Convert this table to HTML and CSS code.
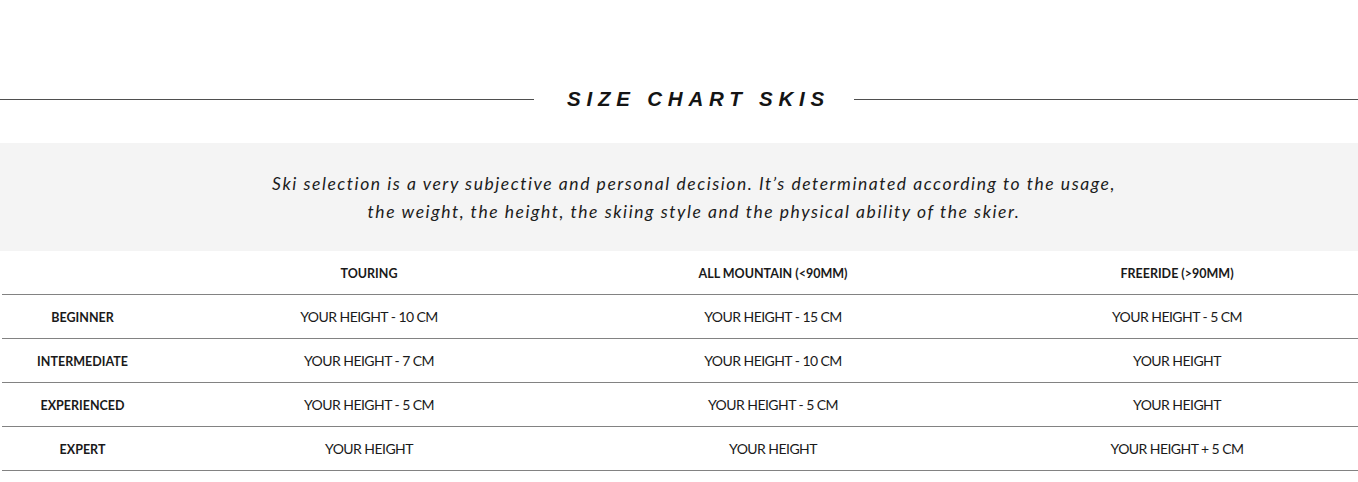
FILE: index.html
```html
<!DOCTYPE html>
<html>
<head>
<meta charset="utf-8">
<link rel="stylesheet" href="styles.css">
</head>
<body>
<section class="chart">
  <div class="title-row">
    <span class="rule"></span>
    <h2 class="title">SIZE CHART SKIS</h2>
    <span class="rule"></span>
  </div>
  <div class="intro">
    <p>Ski selection is a very subjective and personal decision. It’s determinated according to the usage,<br>the weight, the height, the skiing style and the physical ability of the skier.</p>
  </div>
  <div class="table">
    <div class="row head">
      <div class="cell label"></div>
      <div class="cell">TOURING</div>
      <div class="cell">ALL MOUNTAIN (&lt;90MM)</div>
      <div class="cell">FREERIDE (&gt;90MM)</div>
    </div>
    <div class="row">
      <div class="cell label">BEGINNER</div>
      <div class="cell">YOUR HEIGHT - 10 CM</div>
      <div class="cell">YOUR HEIGHT - 15 CM</div>
      <div class="cell">YOUR HEIGHT - 5 CM</div>
    </div>
    <div class="row">
      <div class="cell label">INTERMEDIATE</div>
      <div class="cell">YOUR HEIGHT - 7 CM</div>
      <div class="cell">YOUR HEIGHT - 10 CM</div>
      <div class="cell">YOUR HEIGHT</div>
    </div>
    <div class="row">
      <div class="cell label">EXPERIENCED</div>
      <div class="cell">YOUR HEIGHT - 5 CM</div>
      <div class="cell">YOUR HEIGHT - 5 CM</div>
      <div class="cell">YOUR HEIGHT</div>
    </div>
    <div class="row">
      <div class="cell label">EXPERT</div>
      <div class="cell">YOUR HEIGHT</div>
      <div class="cell">YOUR HEIGHT</div>
      <div class="cell">YOUR HEIGHT + 5 CM</div>
    </div>
  </div>
</section>
</body>
</html>
```

FILE: styles.css
```css
html, body {
  margin: 0;
  padding: 0;
  background: #ffffff;
  overflow: hidden;
}
body {
  font-family: "Lato", "Open Sans", sans-serif;
  color: #161616;
}
.chart {
  width: 1388px;
  padding-top: 84px;
}
.title-row {
  display: flex;
  align-items: center;
  height: 30px;
  margin-bottom: 29px;
}
.rule {
  flex: 1;
  height: 1px;
  background: #4f4f4f;
}
.title {
  margin: 0 24px 0 33px;
  font-family: "Liberation Sans", "Arial", sans-serif;
  font-weight: bold;
  font-style: italic;
  font-size: 20.5px;
  letter-spacing: 5.8px;
  color: #141414;
  line-height: 30px;
}
.intro {
  background: #f4f4f4;
  height: 108px;
  box-sizing: border-box;
  padding-top: 27px;
  text-align: center;
}
.intro p {
  margin: 0;
  font-family: "Lato", sans-serif;
  font-style: italic;
  font-size: 17.5px;
  line-height: 28px;
  letter-spacing: 1.55px;
  color: #1c1c1c;
}
.table {
  padding-left: 2px;
}
.row {
  display: grid;
  grid-template-columns: 165px 404px 404px 404px;
  height: 44px;
  box-sizing: border-box;
  border-bottom: 1px solid #828282;
}
.cell {
  display: flex;
  align-items: center;
  justify-content: center;
  font-size: 14px;
  letter-spacing: -0.55px;
  color: #1a1a1a;
  white-space: nowrap;
}
.cell.label {
  padding-right: 4px;
}
.head .cell,
.cell.label {
  font-weight: bold;
  font-size: 12.5px;
  letter-spacing: 0;
  padding-top: 2px;
}
```
